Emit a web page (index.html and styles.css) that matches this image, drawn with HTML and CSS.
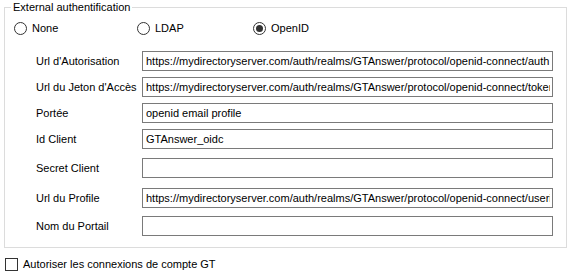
FILE: index.html
```html
<!DOCTYPE html>
<html lang="fr">
<head>
    <meta charset="UTF-8">
    <title>External authentification</title>
    <link rel="stylesheet" href="styles.css">
</head>
<body>
    <fieldset class="auth-group">
        <legend>External authentification</legend>

        <div class="radio-row">
            <label class="option option-none"><span class="radio"></span>None</label>
            <label class="option option-ldap"><span class="radio"></span>LDAP</label>
            <label class="option"><span class="radio checked"></span>OpenID</label>
        </div>

        <div class="fields">
            <label class="field-label">Url d'Autorisation</label>
            <input class="field-input" type="text" value="https://mydirectoryserver.com/auth/realms/GTAnswer/protocol/openid-connect/auth">

            <label class="field-label">Url du Jeton d'Accès</label>
            <input class="field-input" type="text" value="https://mydirectoryserver.com/auth/realms/GTAnswer/protocol/openid-connect/token">

            <label class="field-label">Portée</label>
            <input class="field-input" type="text" value="openid email profile">

            <label class="field-label">Id Client</label>
            <input class="field-input" type="text" value="GTAnswer_oidc">

            <label class="field-label">Secret Client</label>
            <input class="field-input" type="text" value="">

            <label class="field-label">Url du Profile</label>
            <input class="field-input" type="text" value="https://mydirectoryserver.com/auth/realms/GTAnswer/protocol/openid-connect/userinfo">

            <label class="field-label">Nom du Portail</label>
            <input class="field-input" type="text" value="">
        </div>
    </fieldset>

    <label class="check-row"><span class="checkbox"></span>Autoriser les connexions de compte GT</label>
</body>
</html>
```

FILE: styles.css
```css
/* Page basics - WinForms look */
body {
    margin: 0;
    background: #fff;
    color: #000;
    font-family: "Liberation Sans", Arial, sans-serif;
    font-size: 11px;
    line-height: 13px;
}

/* Group box */
.auth-group {
    margin: 1px 9px 0 4px;
    padding: 0 13px 11px 9px;
    border: 1px solid #dcdcdc;
    min-width: 0;
}

.auth-group legend {
    padding: 0 2px;
    margin-left: -3px;
    line-height: 13px;
}

/* Radio buttons */
.radio-row {
    display: flex;
    margin-top: 8px;
    height: 13px;
}

.option {
    display: flex;
    align-items: center;
    gap: 5px;
}

.option-none {
    width: 123px;
}

.option-ldap {
    width: 116px;
}

.radio {
    width: 11px;
    height: 11px;
    border: 1px solid #333;
    border-radius: 50%;
    display: flex;
    align-items: center;
    justify-content: center;
}

.radio.checked::after {
    content: "";
    width: 7px;
    height: 7px;
    border-radius: 50%;
    background: #333;
}

/* Label / textbox grid */
.fields {
    display: grid;
    grid-template-columns: 106px 411px;
    grid-template-rows: 26px 26px 26px 29px 30px 28px 20px;
    align-items: start;
    margin: 16px 0 0 22px;
}

.field-label {
    height: 20px;
    display: flex;
    align-items: center;
}

.field-input {
    box-sizing: border-box;
    width: 411px;
    height: 20px;
    margin: 0;
    padding: 0 2px 0 3px;
    border: 1px solid #7a7a7a;
    border-radius: 0;
    font: inherit;
    color: #000;
    background: #fff;
    outline: none;
}

/* Checkbox below the group */
.check-row {
    display: flex;
    align-items: center;
    gap: 5px;
    margin: 10px 0 0 5px;
}

.checkbox {
    box-sizing: border-box;
    width: 13px;
    height: 13px;
    border: 1px solid #333;
}
```
